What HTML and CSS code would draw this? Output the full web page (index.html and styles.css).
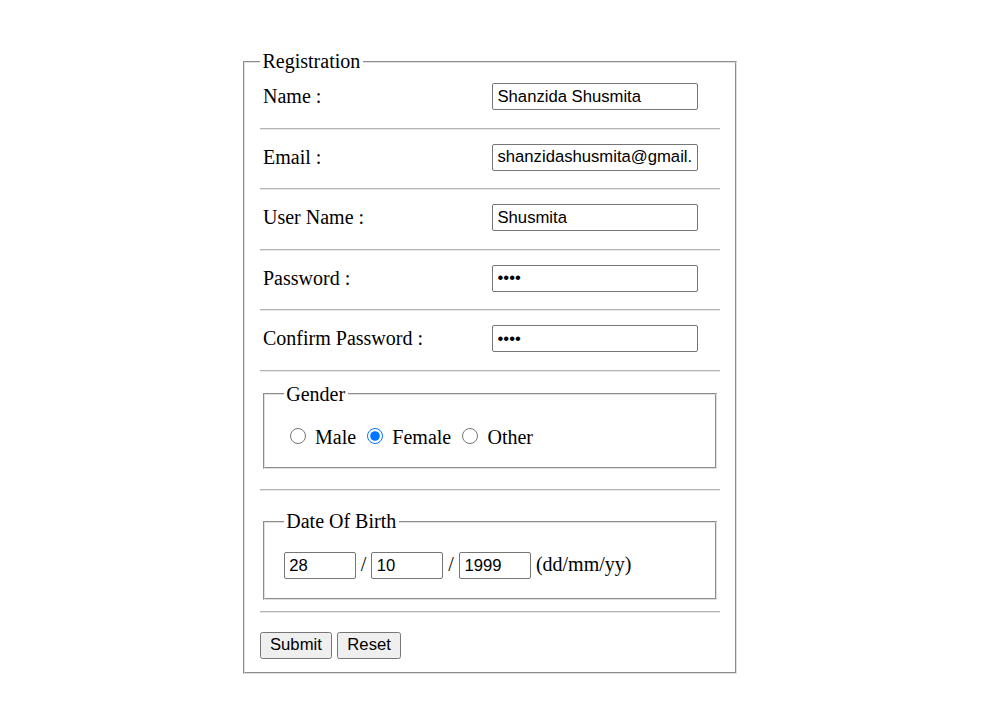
FILE: index.html
```html
<!DOCTYPE html>
<html lang="en">
<head>
<meta charset="utf-8">
<title>Registration</title>
<link rel="stylesheet" href="styles.css">
</head>
<body>
<form class="page">
  <fieldset class="reg">
    <legend class="legend">Registration</legend>

    <div class="row">
      <label class="label">Name :</label>
      <input class="field" type="text" value="Shanzida Shusmita">
    </div>
    <hr class="sep">
    <div class="row">
      <label class="label">Email :</label>
      <input class="field" type="text" value="shanzidashusmita@gmail.com">
    </div>
    <hr class="sep">
    <div class="row">
      <label class="label">User Name :</label>
      <input class="field" type="text" value="Shusmita">
    </div>
    <hr class="sep">
    <div class="row">
      <label class="label">Password :</label>
      <input class="field" type="password" value="1234">
    </div>
    <hr class="sep">
    <div class="row">
      <label class="label">Confirm Password :</label>
      <input class="field" type="password" value="1234">
    </div>
    <hr class="sep">

    <fieldset class="box gender">
      <legend class="legend">Gender</legend>
      <div class="line"><input class="radio" type="radio" name="g"> Male <input class="radio" type="radio" name="g" checked> Female <input class="radio" type="radio" name="g"> Other</div>
    </fieldset>
    <hr class="sep">

    <fieldset class="box dob">
      <legend class="legend">Date Of Birth</legend>
      <div class="line"><input class="small" type="text" value="28"> / <input class="small" type="text" value="10"> / <input class="small" type="text" value="1999"> (dd/mm/yy)</div>
    </fieldset>
    <hr class="sep">

    <div class="actions">
      <button class="btn" type="button">Submit</button>
      <button class="btn" type="button">Reset</button>
    </div>
  </fieldset>
</form>
</body>
</html>
```

FILE: styles.css
```css
html, body {
  margin: 0;
  padding: 0;
  background: #ffffff;
}

body {
  font-family: "Liberation Serif", "Times New Roman", serif;
  font-size: 20px;
  line-height: 23px;
  color: #000000;
}

.page {
  padding: 50px 0 0 243px;
}

.reg {
  box-sizing: border-box;
  width: 494px;
  margin: 0;
  padding: 10px 15px 13.2px;
  border: 2px groove #e0e0e0;
}

.legend {
  padding: 0 2.5px;
  font-size: 20px;
  line-height: 23px;
}

.row {
  display: flex;
  align-items: center;
  height: 27px;
  margin-bottom: 17.5px;
}

.sep + .row {
  margin-top: 14px;
}

.label {
  box-sizing: border-box;
  width: 232px;
  padding-left: 3px;
  flex: none;
}

.field,
.small {
  box-sizing: border-box;
  height: 27px;
  margin: 0;
  padding: 0 4.5px;
  border: 1px solid #767676;
  border-radius: 2px;
  font-family: "Liberation Sans", Arial, sans-serif;
  font-size: 16.67px;
  color: #000000;
  background: #ffffff;
}

.field {
  width: 205.5px;
}

.small {
  width: 72px;
  vertical-align: baseline;
}

.sep {
  display: block;
  height: 0;
  margin: 0;
  border: 0;
  border-top: 1px solid #b4b4b4;
  border-bottom: 1px solid #e6e6e6;
}

.box {
  margin: 11px 3px 20px;
  padding: 18.3px 18.75px 18.25px;
  border: 2px groove #e0e0e0;
}

.dob {
  margin: 19px 3px 11.5px;
  padding: 19.3px 18.75px 18.2px;
}

.line {
  line-height: 23px;
}

.radio {
  width: 16px;
  height: 16px;
  margin: 4px 4px 0 6.25px;
  vertical-align: baseline;
  accent-color: #0075ff;
}

.actions {
  display: flex;
  gap: 5.5px;
  margin-top: 18.7px;
}

.btn {
  box-sizing: border-box;
  height: 27.5px;
  margin: 0;
  padding: 0 9px;
  border: 1px solid #767676;
  border-radius: 2.5px;
  background: #efefef;
  font-family: "Liberation Sans", Arial, sans-serif;
  font-size: 16.67px;
  color: #000000;
}
```
